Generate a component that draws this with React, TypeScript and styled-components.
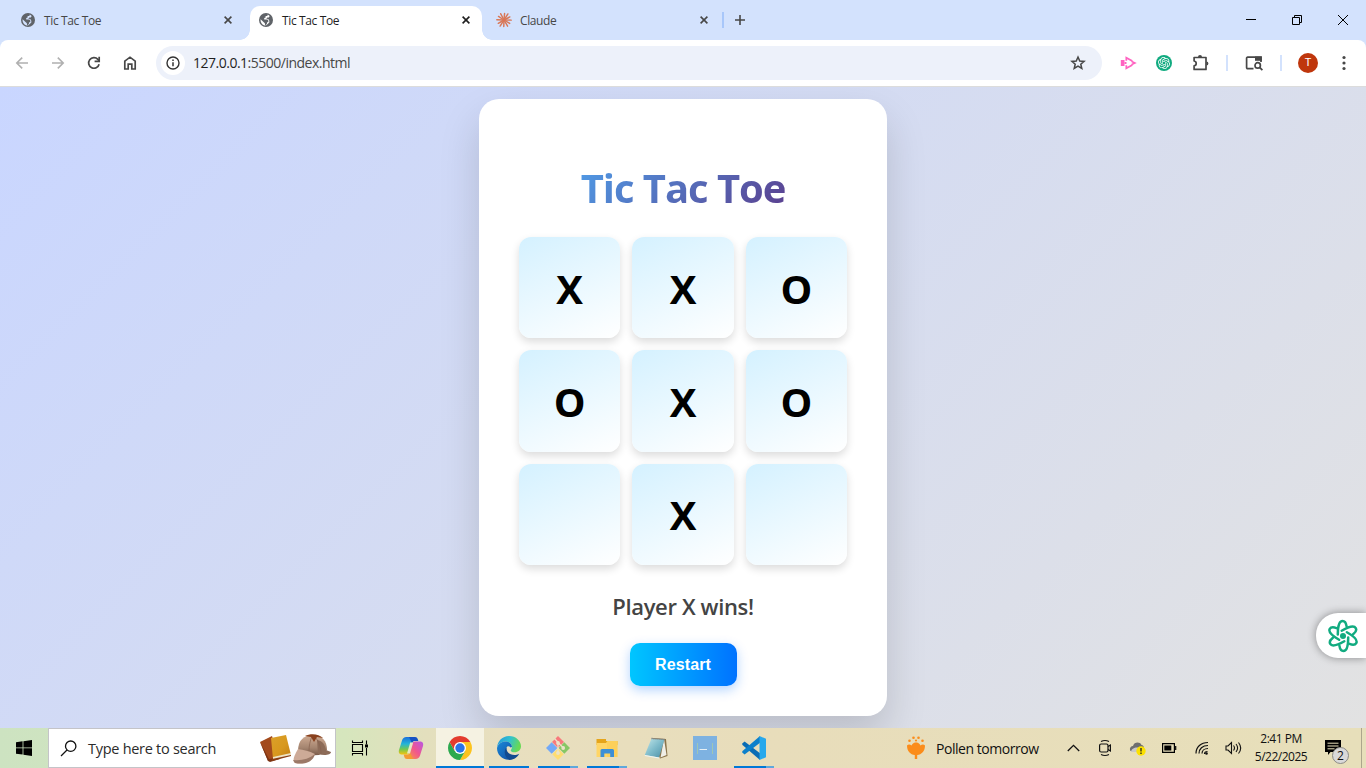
import React from "react";
import styled, { createGlobalStyle, css } from "styled-components";
import { SiOpenai } from "react-icons/si";

const GlobalStyle = createGlobalStyle`
  * { box-sizing: border-box; }
  body { margin: 0; overflow: hidden; font-family: "Open Sans", "Noto Sans", sans-serif; }
  svg { display: block; flex: none; }
`;

const Screen = styled.div`
  width: 1366px;
  height: 768px;
  display: flex;
  flex-direction: column;
  overflow: hidden;
`;

/* ---------- browser chrome ---------- */

const TabStrip = styled.div`
  height: 40px;
  flex: none;
  display: flex;
  align-items: stretch;
  padding: 6px 0 0 12px;
  background: #d3e2fd;
`;

const Tab = styled.div<{ $active?: boolean }>`
  position: relative;
  width: 232px;
  margin-right: 6px;
  padding: 0 10px 6px 9px;
  display: flex;
  align-items: center;
  border-radius: 10px 10px 0 0;
  color: ${(p) => (p.$active ? "#1f1f1f" : "#474747")};
  ${(p) =>
    p.$active &&
    css`
      background: #fff;
      &::before,
      &::after {
        content: "";
        position: absolute;
        bottom: 0;
        width: 10px;
        height: 10px;
      }
      &::before {
        left: -10px;
        background: radial-gradient(circle at 0 0, transparent 9.5px, #fff 10px);
      }
      &::after {
        right: -10px;
        background: radial-gradient(circle at 100% 0, transparent 9.5px, #fff 10px);
      }
    `}
`;

const TabTitle = styled.span<{ $spacing: number }>`
  flex: 1;
  margin-left: 9px;
  padding-top: 1px;
  font-size: 12px;
  line-height: 16px;
  letter-spacing: ${(p) => p.$spacing}px;
`;

const Favicon = styled.span`
  width: 14px;
  display: flex;
  justify-content: center;
  color: #5f6368;
`;

const StripDivider = styled.div`
  width: 2px;
  height: 16px;
  margin: 6px 9px 0 -4px;
  background: #a8c7fa;
`;

const NewTab = styled.div`
  padding-top: 7px;
  color: #474747;
`;

const WindowButtons = styled.div`
  margin: -6px 0 0 auto;
  display: flex;
`;

const WindowButton = styled.div`
  width: 46px;
  height: 40px;
  display: grid;
  place-items: center;
`;

const ToolbarBack = styled.div`
  height: 47px;
  flex: none;
  background: #d3e2fd;
`;

const Toolbar = styled.div`
  height: 47px;
  display: flex;
  align-items: center;
  padding: 0 4px;
  background: #fff;
  border-bottom: 1px solid #dcdcdc;
  border-radius: 8px 8px 0 0;
`;

const ToolButton = styled.div<{ $color?: string }>`
  width: 36px;
  height: 36px;
  display: grid;
  place-items: center;
  color: ${(p) => p.$color ?? "#474747"};
`;

const Omnibox = styled.div`
  flex: 1;
  height: 34px;
  margin: 0 8px;
  padding: 0 16px 0 5px;
  display: flex;
  align-items: center;
  border-radius: 17px;
  background: #edf1fa;
`;

const SiteInfo = styled.div`
  width: 24px;
  height: 24px;
  border-radius: 50%;
  display: grid;
  place-items: center;
  background: #fff;
`;

const Url = styled.div`
  flex: 1;
  margin-left: 8px;
  font-size: 14px;
  line-height: 20px;
  letter-spacing: -0.5px;
  color: #1f1f1f;
  span { color: #474747; }
`;

const ToolDivider = styled.div`
  width: 2px;
  height: 16px;
  margin: 0 8px;
  background: #d3e2fd;
`;

const Avatar = styled.div`
  width: 20px;
  height: 20px;
  border-radius: 50%;
  background: #bf360c;
  color: #fff;
  font: 11px/20px Roboto, sans-serif;
  text-align: center;
`;

/* ---------- page ---------- */

const Page = styled.main`
  position: relative;
  height: 641px;
  flex: none;
  display: flex;
  justify-content: center;
  align-items: flex-start;
  padding-top: 12px;
  overflow: hidden;
  background: linear-gradient(135deg, #c9d6ff, #e2e2e2);
`;

const Card = styled.section`
  width: 408px;
  height: 617px;
  padding: 65px 40px 0;
  display: flex;
  flex-direction: column;
  align-items: center;
  border-radius: 20px;
  background: #fff;
  box-shadow: 0 20px 40px rgba(0, 0, 0, 0.15);
`;

const Title = styled.h1`
  margin: 0 0 25px;
  font-size: 40px;
  line-height: 48px;
  font-weight: 700;
  letter-spacing: -1.05px;
  background: linear-gradient(135deg, #4f9be6, #5b3f8e);
  -webkit-background-clip: text;
  background-clip: text;
  color: transparent;
`;

const Board = styled.div`
  width: 328px;
  height: 328px;
  display: grid;
  grid-template: repeat(3, 1fr) / repeat(3, 1fr);
  gap: 12px;
`;

const Cell = styled.div`
  display: grid;
  place-items: center;
  padding-top: 2px;
  border-radius: 12px;
  background: linear-gradient(155deg, #d4f1ff, #ffffff);
  box-shadow: 0 4px 8px rgba(0, 0, 0, 0.14);
  font-size: 40px;
  line-height: 48px;
  font-weight: 700;
  color: #000;
`;

const Status = styled.p`
  margin: 26px 0 22px;
  font-size: 22px;
  line-height: 30px;
  font-weight: 600;
  letter-spacing: -0.36px;
  color: #444;
`;

const Restart = styled.button`
  width: 107px;
  height: 43px;
  padding: 0;
  border: 0;
  border-radius: 10px;
  background: linear-gradient(to right, #00c6ff, #0072ff);
  box-shadow: 0 4px 12px rgba(0, 114, 255, 0.3);
  font: 700 16px "Liberation Sans", Arial, sans-serif;
  letter-spacing: 0.1px;
  color: #fff;
`;

const SideTab = styled.div`
  position: absolute;
  right: 0;
  top: 526px;
  width: 50px;
  height: 45px;
  padding-left: 11px;
  display: flex;
  align-items: center;
  border-radius: 22px 0 0 22px;
  background: #fff;
  box-shadow: 0 0 8px rgba(0, 0, 0, 0.4);
`;

/* ---------- taskbar ---------- */

const Taskbar = styled.footer`
  height: 40px;
  flex: none;
  display: flex;
  background: linear-gradient(90deg, #cde3c1 0, #d6e6bd 345px, #e3dfbd 425px, #e8dfbf 500px, #e8ddbb 760px, #e7dfba 1366px);
`;

const StartButton = styled.div`
  width: 48px;
  display: grid;
  place-items: center;
`;

const SearchBox = styled.div`
  width: 288px;
  padding: 0 3px 0 11px;
  display: flex;
  align-items: center;
  background: #fff;
  border: 1px solid #c4c4c8;
`;

const SearchText = styled.span`
  flex: 1;
  margin-left: 11px;
  font-size: 14.5px;
  letter-spacing: -0.28px;
  color: #2b2b2b;
`;

const Apps = styled.div`
  display: flex;
  gap: 1px;
  margin-left: 3px;
`;

const TaskButton = styled.div<{ $active?: boolean; $running?: boolean; $stacked?: boolean }>`
  width: 48px;
  height: 40px;
  display: flex;
  flex-direction: column;
  align-items: center;
  justify-content: space-between;
  padding-top: 8px;
  background: ${(p) => (p.$active ? "#f5f2e2" : "transparent")};
  &::after {
    content: "";
    width: ${(p) => (p.$active ? 48 : 40)}px;
    height: 2px;
    background: ${(p) =>
      p.$stacked
        ? "linear-gradient(90deg, #0078d7 32px, #5fa8dc 32px)"
        : p.$active || p.$running
          ? "#0078d7"
          : "transparent"};
  }
`;

const Tray = styled.div`
  margin-left: auto;
  display: flex;
  align-items: center;
  color: #111;
`;

const Weather = styled.div`
  display: flex;
  align-items: center;
  gap: 11px;
  margin-right: 18px;
  width: 134px;
  white-space: nowrap;
  font-size: 14px;
  letter-spacing: -0.46px;
`;

const TrayIcon = styled.div<{ $w?: number }>`
  width: ${(p) => p.$w ?? 32}px;
  display: grid;
  place-items: center;
`;

const Clock = styled.div`
  width: 64px;
  text-align: center;
  font-size: 12px;
  line-height: 18px;
  letter-spacing: -0.5px;
  white-space: nowrap;
`;

const Notifications = styled.div`
  position: relative;
  width: 48px;
  height: 40px;
  padding: 12px 0 0 12px;
`;

const Badge = styled.span`
  position: absolute;
  left: 19px;
  top: 19px;
  width: 17px;
  height: 17px;
  border-radius: 50%;
  border: 1px solid #8b8b86;
  background: #d9d9d9;
  font-size: 12px;
  line-height: 15px;
  text-align: center;
`;

const ShowDesktop = styled.div`
  width: 5px;
  height: 40px;
  border-left: 1px solid #aca68c;
`;

/* ---------- icons ---------- */

const CloseIcon = ({ color = "#474747" }: { color?: string }) => (
  <svg width="12" height="12" viewBox="0 0 12 12" stroke={color} strokeWidth="1.6">
    <path d="M2.6 2.6l6.8 6.8M9.4 2.6L2.6 9.4" />
  </svg>
);

const GlobeIcon = ({ land }: { land: string }) => (
  <svg width="14" height="14" viewBox="0 0 14 14">
    <circle cx="7" cy="7" r="7" fill="#5f6368" />
    <path d="M8.800 1.600L8.300 2.900H6.600V4.400L5.200 5.100V6.500H8.400L9.300 7.600V9.200H8V10.600L6.600 12.500C6.100 12 5.800 11.500 5.900 10.300L4.500 8.900 1.600 6.300C1.400 8 1.900 9.600 3 10.900 4.200 12.100 5.600 12.600 7 12.600L8.700 11.100 10.300 9.500V7.700L9.300 6.100 7.300 5.700 8.300 4.600H9.800L10.700 3.100z" fill={land} />
  </svg>
);

const Burst = () => (
  <svg width="16" height="16" viewBox="0 0 16 16" stroke="#d97757" strokeWidth="1.45" strokeLinecap="round">
    {[5, 33, 62, 91, 121, 150, 182, 213, 240, 272, 303, 332].map((a, i) => (
      <path key={a} d={`M8 8V${i % 2 ? 0.8 : 1.4}`} transform={`rotate(${a} 8 8)`} />
    ))}
  </svg>
);

const BackIcon = ({ flip }: { flip?: boolean }) => (
  <svg width="16" height="16" viewBox="0 0 16 16" fill="none" stroke="#b0b0b0" strokeWidth="1.6" transform={flip ? "scale(-1 1)" : undefined}>
    <path d="M14 8H3M8.2 2.6L2.8 8l5.4 5.4" />
  </svg>
);

const ReloadIcon = () => (
  <svg width="16" height="16" viewBox="0 0 16 16" fill="none" stroke="#474747" strokeWidth="1.7">
    <path d="M13.1 9.2A5.3 5.3 0 1 1 11.9 4.4L13.3 5.9" />
    <path d="M13.2 1.8v4.6H8.6" />
  </svg>
);

const HomeIcon = () => (
  <svg width="16" height="16" viewBox="0 0 16 16" fill="none" stroke="#474747" strokeWidth="1.7">
    <path d="M2.8 14V6.2L8 2.2l5.2 4V14H9.8V9.2H6.2V14z" />
  </svg>
);

const InfoIcon = () => (
  <svg width="16" height="16" viewBox="0 0 16 16" fill="none" stroke="#333" strokeWidth="1.4">
    <circle cx="8" cy="8" r="6" />
    <path d="M8 7.2v4M8 4.5v1.5" strokeWidth="1.5" />
  </svg>
);

const StarIcon = () => (
  <svg width="16" height="16" viewBox="0 0 16 16" fill="none" stroke="#474747" strokeWidth="1.5">
    <path d="M8 2l1.75 4 4.35.4-3.3 2.85 1 4.25L8 11.2l-3.8 2.3 1-4.25L1.9 6.4l4.35-.4z" />
  </svg>
);

const PinkPlayIcon = () => (
  <svg width="17" height="14" viewBox="0 0 17 14" fill="#ff63c1">
    <path d="M.8 4h3.700v6H.8z" />
    <path d="M6.300 4.800V1.700l6 3.400M6.300 9.200v3.100l6-3.400" fill="none" stroke="#ff63c1" strokeWidth="1.700" />
    <path d="M11.500 4.400L16.800 7l-5.300 2.600V7.800L13 7l-1.500-.8zM4.500 6h2v2h-2z" />
  </svg>
);

const GreenChip = styled.div`
  width: 16px;
  height: 16px;
  border-radius: 50%;
  display: grid;
  place-items: center;
  background: #11ab80;
  color: #fff;
`;

const PuzzleIcon = () => (
  <svg width="18" height="18" viewBox="0 0 18 18">
    <path d="M3.1 3.500H15v11.900H3.1v-3.600c2.800-.5 2.800-4.300 0-4.800z" fill="none" stroke="#474747" strokeWidth="1.7" strokeLinejoin="round" />
    <path d="M7 3a2 2 0 0 1 4 0zM15.400 7.500a2 2 0 0 1 0 4z" fill="#474747" />
  </svg>
);

const TabSearchIcon = () => (
  <svg width="18" height="16" viewBox="0 0 18 16" fill="none" stroke="#474747" strokeWidth="1.7">
    <path d="M8.5 13.6H2.6a1 1 0 0 1-1-1V3.2a1 1 0 0 1 1-1H16V7" />
    <path d="M10 1.5h6.8v4.3H10z" fill="#474747" stroke="none" />
    <circle cx="12.7" cy="10.4" r="2.7" />
    <path d="M14.6 12.4l2.8 2.8" />
  </svg>
);

const DotsIcon = () => (
  <svg width="4" height="16" viewBox="0 0 4 16" fill="#474747">
    <circle cx="2" cy="2.5" r="1.6" />
    <circle cx="2" cy="8" r="1.6" />
    <circle cx="2" cy="13.5" r="1.6" />
  </svg>
);

const AtomIcon = () => (
  <svg width="32" height="34" viewBox="-16 -17 32 34" fill="none" stroke="#11ab80" strokeWidth="2.5" strokeLinecap="round">
    {[0, 60, 120, 180, 240, 300].map((a) => (
      <path key={a} d="M3.600 -9.600C3.100 -13 1.800 -15 -.5 -15C-3.400 -15 -5.200 -10 -5.200 -1.500" transform={`rotate(${a})`} />
    ))}
    <circle r="3" fill="#11ab80" stroke="none" />
  </svg>
);

const WindowsIcon = () => (
  <svg width="16" height="16" viewBox="0 0 16 16" fill="#000">
    <path d="M0 2.2l6.6-.9v6.2H0zM7.4 1.2L16 0v7.5H7.4zM0 8.3h6.6v6.3L0 13.7zM7.4 8.3H16V16l-8.6-1.2z" />
  </svg>
);

const MagnifierIcon = () => (
  <svg width="17" height="17" viewBox="0 0 17 17" fill="none" stroke="#111" strokeWidth="1.3">
    <circle cx="10.7" cy="6.2" r="5.2" />
    <path d="M7 10L1 16" />
  </svg>
);

const DetectiveArt = () => (
  <svg width="73" height="34" viewBox="0 0 73 34">
    <defs>
      <linearGradient id="gold" x2="1" y2="1">
        <stop stopColor="#dba129" />
        <stop offset=".55" stopColor="#d8981e" />
        <stop offset="1" stopColor="#c07d12" />
      </linearGradient>
      <linearGradient id="felt" x2="0" y2="1">
        <stop stopColor="#d0ac94" />
        <stop offset=".6" stopColor="#a58570" />
        <stop offset="1" stopColor="#765747" />
      </linearGradient>
    </defs>
    <path d="M1 11L13 5l7 22-11 3z" fill="#a34a1c" />
    <path d="M1 11l8 19 2 1 10-3 1-2-12 2z" fill="#7b3313" />
    <path d="M12 7l15-3 5 20-18 4z" fill="url(#gold)" />
    <path d="M14 26l18-4v3l-18 4z" fill="#efe4c4" />
    <path d="M13 28l19-4v1l-19 5z" fill="#8a3d12" />
    <path d="M39 20C39 9 45 4 54 4c9 0 14 6 14 15l-8 5-19 1z" fill="url(#felt)" />
    <path d="M58 9c6 1 8 5 9 10l5 2c0 3-7 4-13 2z" fill="#8c6b58" />
    <path d="M39 18c6 1 11 2 17 5-3 7-10 11-20 9-3-2-1-7 3-14z" fill="#cdaa97" />
    <path d="M34 29c8 1 16-1 22-6-2 8-10 11-20 9z" fill="#9b7867" />
    <path d="M53 5c-2 5-3 10-3 15M55 5c5 5 7 11 7 18" fill="none" stroke="#86624f" strokeWidth=".7" />
    <path d="M46 5c6-3 14-2 18 2l-6-1-3 5-3-5z" fill="#89411e" />
  </svg>
);

const TaskViewIcon = () => (
  <svg width="18" height="16" viewBox="0 0 18 16" fill="none" stroke="#000" strokeWidth="1.1">
    <path d="M1.500.5v2h10v-2M1.500 15.500v-2h10v2M1.500 4.500h10v7h-10zM15.500.5v4M15.500 8v7.5" />
    <path d="M14 4.500h3v3h-3z" fill="#000" stroke="none" />
  </svg>
);

const CopilotIcon = () => (
  <svg width="26" height="24" viewBox="0 0 26 24">
    <defs>
      <linearGradient id="cpA" x2="0" y2="1">
        <stop stopColor="#1a6fdc" />
        <stop offset=".4" stopColor="#24b5d8" />
        <stop offset=".7" stopColor="#73c850" />
        <stop offset="1" stopColor="#f6c40d" />
      </linearGradient>
      <linearGradient id="cpB" x1="1" x2="0" y2="1">
        <stop stopColor="#b758e6" />
        <stop offset=".5" stopColor="#f0568e" />
        <stop offset="1" stopColor="#fb9a41" />
      </linearGradient>
    </defs>
    <path d="M8.5 1h8L12.5 15c-.7 2.4-1.5 3.5-3.5 3.5H4C1 18.500.4 16.300 1 14L4 4.500C4.700 2.200 6 1 8.500 1z" fill="url(#cpA)" />
    <path d="M11 1h6c2 0 2.700 1.500 3.300 4h-3.500c-1.500 0-2.300.5-2.800 2z" fill="#1551c4" />
    <path d="M17.5 23h-8L13.500 9c.7-2.400 1.500-3.500 3.500-3.500h5c3 0 3.600 2.200 3 4.500L22 19.500c-.7 2.300-2 3.500-4.500 3.500z" fill="url(#cpB)" />
    <path d="M15 23H9c-2 0-2.700-1.500-3.300-4.500h3.500c1.500 0 2.300-.5 2.800-2z" fill="#f39b32" />
    <path d="M12.200 6.500h3l-3.200 11H9z" fill="#e5e7c4" />
  </svg>
);

const ChromeIcon = () => (
  <svg width="24" height="24" viewBox="0 0 24 24">
    <path d="M12 6h10.390A12 12 0 0 1 12 24l5.200-9z" fill="#fcc31e" />
    <path d="M17.200 15L12 24A12 12 0 0 1 1.610 6L6.800 15z" fill="#2da94f" />
    <path d="M6.800 15L1.610 6A12 12 0 0 1 22.390 6H12z" fill="#e33b2e" />
    <circle cx="12" cy="12" r="6" fill="#fff" />
    <circle cx="12" cy="12" r="4.700" fill="#2a73e8" />
  </svg>
);

const EdgeIcon = () => (
  <svg width="24" height="24" viewBox="0 0 24 24">
    <defs>
      <linearGradient id="edA" x2="1" y2=".3">
        <stop stopColor="#2496dd" />
        <stop offset=".55" stopColor="#31c1d0" />
        <stop offset="1" stopColor="#67d955" />
      </linearGradient>
      <linearGradient id="edB" x2="1" y2="1">
        <stop stopColor="#1a8ada" />
        <stop offset="1" stopColor="#10489c" />
      </linearGradient>
    </defs>
    <path d="M0 11.500C.5 5 5.500 0 12 0c7 0 12 5 12 10.300 0 3.800-3 6-6.300 6-2.700 0-4-1-4-1.800 0-.8 1.300-1.300 1.300-3.500C15 8 12 5.500 8.500 5.500 4.500 5.500 1 8 0 11.500z" fill="url(#edA)" />
    <path d="M0 12c1-4 4.500-6.500 8.500-6.500 3.700 0 6.500 2.300 6.500 5.500l-1.500.5C12 9.500 10 10 9.300 12c-1.300 5 2.200 9.500 8.500 9.800C9.500 27 0 21 0 12z" fill="url(#edB)" />
    <path d="M9.700 11.200c-1 4.500 3.500 8.500 9 7.800 1.500-.2 2.500-.6 3.500-1.200C20 22 16 24 12.500 24 7 21 6.500 14.500 9.700 11.200z" fill="#114a90" />
  </svg>
);

const GitIcon = () => (
  <svg width="24" height="24" viewBox="0 0 24 24">
    <path d="M12 0l6 6-6 6-6-6z" fill="#f8797c" />
    <path d="M18.300 6.300l5.700 5.700-5.700 5.700L12.600 12z" fill="#87c765" />
    <path d="M12 12.600l5.700 5.700L12 24l-5.700-5.700z" fill="#ffdd72" />
    <path d="M5.700 6.300l5.700 5.700-5.700 5.700L0 12z" fill="#72a9f7" />
    <path d="M8.500 2.500L12 6.200V18M12 6.500l5.500 5.500" fill="none" stroke="#ece3c8" strokeWidth="1.300" />
    <circle cx="12" cy="7" r="1.900" fill="#ece3c8" />
    <circle cx="17.200" cy="12" r="1.900" fill="#ece3c8" />
    <circle cx="12" cy="17" r="1.900" fill="#ece3c8" />
  </svg>
);

const ExplorerIcon = () => (
  <svg width="22" height="24" viewBox="0 0 22 24">
    <path d="M.500 3H10v2h11.500v4H.500z" fill="#e6a51a" />
    <path d="M.500 7H10l1.500-2h10v16H.500z" fill="#ffd566" />
    <path d="M11 5h10.500v16H11z" fill="#fccb4f" opacity=".5" />
    <path d="M4.500 21v-6.500a1.500 1.500 0 0 1 1.500-1.500h10.500a1.500 1.500 0 0 1 1.500 1.500V21h-3.800v-3.500H8.300V21z" fill="#3d8fd6" />
  </svg>
);

const NotepadIcon = () => (
  <svg width="24" height="24" viewBox="0 0 24 24">
    <defs>
      <linearGradient id="np" x2="1" y2="1">
        <stop stopColor="#c4e8ea" />
        <stop offset=".5" stopColor="#7fbccb" />
        <stop offset="1" stopColor="#4b8ea6" />
      </linearGradient>
    </defs>
    <path d="M8 2l14 1 1.500 17L16 22.500z" fill="#8a744b" />
    <path d="M20 3l2.500 16-6 2.500z" fill="#efeee6" />
    <path d="M7.500 2.500l13 1L15 21.500.800 19z" fill="url(#np)" />
    <path d="M.8 19L15 21.500v1L.8 20z" fill="#eef5f4" />
    <path d="M7.500 2.500l13 1" stroke="#777" strokeWidth="1.500" strokeDasharray="1 1" />
  </svg>
);

const BlueSquareIcon = () => (
  <svg width="24" height="24" viewBox="0 0 24 24" fill="none">
    <path d="M0 0h24v24H0z" fill="#7eb2e1" />
    <path d="M4.500 7v11M19.500 7v11" stroke="#9fc6b4" />
    <path d="M6.500 13.500h7.500" stroke="#e6f0f5" />
  </svg>
);

const CodeIcon = () => (
  <svg width="24" height="24" viewBox="0 0 24 24">
    <path d="M0 7.800L2.600 5.500 18 17.200V24L.500 9z" fill="#0a6cb5" />
    <path d="M0 16.200l2.600 2.300L18 6.800V0L.500 15z" fill="#0d80cb" />
    <path d="M17.500 0L24 2.800v18.400L17.500 24z" fill="#27a8ec" />
  </svg>
);

const PollenIcon = () => (
  <svg width="18" height="24" viewBox="0 0 18 24" fill="#fb8c1a">
    <path d="M0 9.500C1 8.300 3 8 4.500 9.500 5.500 7 8 6.500 9 6.500s3.500.5 4.500 3C15 8 17 8.300 18 9.500c0 6-3.500 9-7.800 9.500V23H7.800v-4C3.500 18.500 0 15.500 0 9.500z" />
    <circle cx="2.500" cy="4.800" r="1.300" />
    <circle cx="6.500" cy="1.800" r="1.300" />
    <circle cx="11.500" cy="1.800" r="1.300" />
    <circle cx="15.500" cy="4.800" r="1.300" />
    <circle cx="9" cy="4.500" r="1.100" />
  </svg>
);

const marks = ["X", "X", "O", "O", "X", "O", "", "X", ""];

export default function App() {
  return (
    <Screen>
      <GlobalStyle />
      <TabStrip>
        <Tab>
          <Favicon><GlobeIcon land="#d3e2fd" /></Favicon>
          <TabTitle $spacing={-0.37}>Tic Tac Toe</TabTitle>
          <CloseIcon />
        </Tab>
        <Tab $active>
          <Favicon><GlobeIcon land="#fff" /></Favicon>
          <TabTitle $spacing={-0.37}>Tic Tac Toe</TabTitle>
          <CloseIcon color="#1f1f1f" />
        </Tab>
        <Tab>
          <Favicon><Burst /></Favicon>
          <TabTitle $spacing={-0.4}>Claude</TabTitle>
          <CloseIcon />
        </Tab>
        <StripDivider />
        <NewTab>
          <svg width="14" height="14" viewBox="0 0 14 14" stroke="#474747" strokeWidth="1.6">
            <path d="M7 2v10M2 7h10" />
          </svg>
        </NewTab>
        <WindowButtons>
          <WindowButton>
            <svg width="10" height="10" viewBox="0 0 10 10" fill="#000"><path d="M0 4h10v1H0z" /></svg>
          </WindowButton>
          <WindowButton>
            <svg width="10" height="10" viewBox="0 0 10 10" fill="none" stroke="#000">
              <path d="M.5 2.500h7v7h-7zM2.500 2.500v-2h7v7h-2" />
            </svg>
          </WindowButton>
          <WindowButton>
            <svg width="10" height="10" viewBox="0 0 10 10" stroke="#000"><path d="M0 0l10 10M10 0L0 10" /></svg>
          </WindowButton>
        </WindowButtons>
      </TabStrip>
      <ToolbarBack>
        <Toolbar>
          <ToolButton><BackIcon /></ToolButton>
          <ToolButton><BackIcon flip /></ToolButton>
          <ToolButton><ReloadIcon /></ToolButton>
          <ToolButton><HomeIcon /></ToolButton>
          <Omnibox>
            <SiteInfo><InfoIcon /></SiteInfo>
            <Url>127.0.0.1<span>:5500/index.html</span></Url>
            <StarIcon />
          </Omnibox>
          <ToolButton><PinkPlayIcon /></ToolButton>
          <ToolButton><GreenChip><SiOpenai size={12} /></GreenChip></ToolButton>
          <ToolButton><PuzzleIcon /></ToolButton>
          <ToolDivider />
          <ToolButton><TabSearchIcon /></ToolButton>
          <ToolDivider />
          <ToolButton><Avatar>T</Avatar></ToolButton>
          <ToolButton><DotsIcon /></ToolButton>
        </Toolbar>
      </ToolbarBack>

      <Page>
        <Card>
          <Title>Tic Tac Toe</Title>
          <Board>
            {marks.map((m, i) => (
              <Cell key={i}>{m}</Cell>
            ))}
          </Board>
          <Status>Player X wins!</Status>
          <Restart>Restart</Restart>
        </Card>
        <SideTab><AtomIcon /></SideTab>
      </Page>

      <Taskbar>
        <StartButton><WindowsIcon /></StartButton>
        <SearchBox>
          <MagnifierIcon />
          <SearchText>Type here to search</SearchText>
          <DetectiveArt />
        </SearchBox>
        <StartButton><TaskViewIcon /></StartButton>
        <Apps>
          <TaskButton><CopilotIcon /></TaskButton>
          <TaskButton $active><ChromeIcon /></TaskButton>
          <TaskButton $running><EdgeIcon /></TaskButton>
          <TaskButton $stacked><GitIcon /></TaskButton>
          <TaskButton $stacked><ExplorerIcon /></TaskButton>
          <TaskButton><NotepadIcon /></TaskButton>
          <TaskButton><BlueSquareIcon /></TaskButton>
          <TaskButton $stacked><CodeIcon /></TaskButton>
        </Apps>
        <Tray>
          <Weather><PollenIcon />Pollen tomorrow</Weather>
          <TrayIcon $w={30}>
            <svg width="14" height="8" viewBox="0 0 14 8" fill="none" stroke="#111" strokeWidth="1.3"><path d="M.8 7L6.500 1.300 12.200 7" /></svg>
          </TrayIcon>
          <TrayIcon>
            <svg width="12" height="18" viewBox="0 0 12 18" fill="none" stroke="#111" strokeWidth="1.200">
              <path d="M2 2.500Q6 .5 10 2.500M2 15.500Q6 17.500 10 15.500M9 7.500l2.400-1.500v6L9 10.500" />
              <rect x=".6" y="5" width="8.400" height="8" rx="1.500" />
            </svg>
          </TrayIcon>
          <TrayIcon>
            <svg width="17" height="15" viewBox="0 0 17 15">
              <path d="M1 9.500C.5 6.500 2 5 4 5 5 .8 11 .5 12.500 4c1.500 0 2.500 1.500 2.500 3.500v3H3z" fill="#6f6f6f" />
              <path d="M2 11c0-4 7-6 9.500-3v3z" fill="#c9c9c9" />
              <circle cx="12" cy="10" r="4.700" fill="#fce100" />
              <path d="M12 7v3.500M12 11.500V13" stroke="#222" strokeWidth="1.300" />
            </svg>
          </TrayIcon>
          <TrayIcon>
            <svg width="16" height="10" viewBox="0 0 16 10" fill="none" stroke="#000" strokeWidth="1.200">
              <path d="M1.600.600h11.800v8.800H1.600zM14.700 3v4" />
              <path d="M3.300 2.500h7v5h-7z" fill="#000" stroke="none" />
            </svg>
          </TrayIcon>
          <TrayIcon>
            <svg width="14" height="14" viewBox="0 0 14 14" fill="none" stroke="#111" strokeWidth="1.200">
              <path d="M2 12.500C2 6 7 1.500 14 1.500M5 12.500c0-4.500 3.500-8 9-8M8 12.500c0-3 2.500-5 6-5M10.500 13c0-1.700 1-2.500 3-2.500" />
              <circle cx="12.500" cy="12.500" r="1.300" fill="#111" stroke="none" />
            </svg>
          </TrayIcon>
          <TrayIcon>
            <svg width="17" height="14" viewBox="0 0 17 14" fill="none" stroke="#111" strokeWidth="1.100">
              <path d="M1 5v4h2l3.500 3.500v-11L3 5zM8.500 4.500c1.200 1.500 1.200 3.500 0 5M11 3c2 2.500 2 5.500 0 8M13.500 1.500c2.800 3.500 2.800 7.500 0 11" />
            </svg>
          </TrayIcon>
          <Clock>2:41 PM<br />5/22/2025</Clock>
          <Notifications>
            <svg width="16" height="16" viewBox="0 0 16 16">
              <path d="M0 0h16v12H5.500L3 15v-3H0z" fill="#000" />
              <path d="M2.500 3.200h11M2.500 6h11M2.500 8.800h7" stroke="#e7dfba" strokeWidth="1" />
            </svg>
            <Badge>2</Badge>
          </Notifications>
          <ShowDesktop />
        </Tray>
      </Taskbar>
    </Screen>
  );
}
